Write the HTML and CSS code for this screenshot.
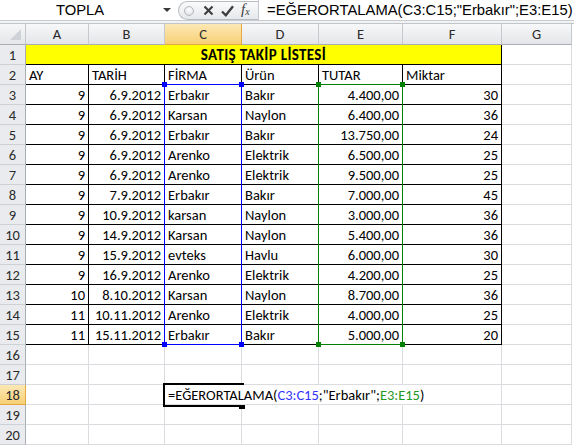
FILE: index.html
```html
<!DOCTYPE html>
<html lang="tr">
<head>
<meta charset="utf-8">
<title>SATIŞ TAKİP LİSTESİ</title>
<link rel="stylesheet" href="styles.css">
</head>
<body>
<div class="fbar">
  <div class="namebox"><span class="name">TOPLA</span><span class="dd"></span></div>
  <div class="capsule">
    <span class="bead"></span>
    <svg class="ico-x" width="11" height="11" viewBox="0 0 11 11"><path d="M1.5 1.5 L9.5 9.5 M9.5 1.5 L1.5 9.5" stroke="#3c3c3c" stroke-width="2.1" fill="none"/></svg>
    <svg class="ico-ok" width="13" height="12" viewBox="0 0 13 12"><path d="M1 6.5 L4.8 10.2 L12 1.2" stroke="#3c3c3c" stroke-width="2.3" fill="none"/></svg>
    <span class="fx"><i>f</i><sub>x</sub></span>
  </div>
  <div class="formula">=EĞERORTALAMA(C3:C15;"Erbakır";E3:E15)</div>
</div>
<div class="band"></div>
<div class="sheet">
  <div class="corner"><span class="tri"></span></div>
  <div class="ch">A</div><div class="ch">B</div><div class="ch hl">C</div><div class="ch">D</div><div class="ch">E</div><div class="ch">F</div><div class="ch">G</div>

  <div class="rh">1</div><div class="c title">SATIŞ TAKİP LİSTESİ</div><div class="c"></div>

  <div class="rh">2</div><div class="c t">AY</div><div class="c t">TARİH</div><div class="c t">FİRMA</div><div class="c t">Ürün</div><div class="c t">TUTAR</div><div class="c t">Miktar</div><div class="c"></div>

  <div class="rh">3</div><div class="c t r">9</div><div class="c t r">6.9.2012</div><div class="c t">Erbakır</div><div class="c t">Bakır</div><div class="c t r">4.400,00</div><div class="c t r">30</div><div class="c"></div>
  <div class="rh">4</div><div class="c t r">9</div><div class="c t r">6.9.2012</div><div class="c t">Karsan</div><div class="c t">Naylon</div><div class="c t r">6.400,00</div><div class="c t r">36</div><div class="c"></div>
  <div class="rh">5</div><div class="c t r">9</div><div class="c t r">6.9.2012</div><div class="c t">Erbakır</div><div class="c t">Bakır</div><div class="c t r">13.750,00</div><div class="c t r">24</div><div class="c"></div>
  <div class="rh">6</div><div class="c t r">9</div><div class="c t r">6.9.2012</div><div class="c t">Arenko</div><div class="c t">Elektrik</div><div class="c t r">6.500,00</div><div class="c t r">25</div><div class="c"></div>
  <div class="rh">7</div><div class="c t r">9</div><div class="c t r">6.9.2012</div><div class="c t">Arenko</div><div class="c t">Elektrik</div><div class="c t r">9.500,00</div><div class="c t r">25</div><div class="c"></div>
  <div class="rh">8</div><div class="c t r">9</div><div class="c t r">7.9.2012</div><div class="c t">Erbakır</div><div class="c t">Bakır</div><div class="c t r">7.000,00</div><div class="c t r">45</div><div class="c"></div>
  <div class="rh">9</div><div class="c t r">9</div><div class="c t r">10.9.2012</div><div class="c t">karsan</div><div class="c t">Naylon</div><div class="c t r">3.000,00</div><div class="c t r">36</div><div class="c"></div>
  <div class="rh">10</div><div class="c t r">9</div><div class="c t r">14.9.2012</div><div class="c t">Karsan</div><div class="c t">Naylon</div><div class="c t r">5.400,00</div><div class="c t r">36</div><div class="c"></div>
  <div class="rh">11</div><div class="c t r">9</div><div class="c t r">15.9.2012</div><div class="c t">evteks</div><div class="c t">Havlu</div><div class="c t r">6.000,00</div><div class="c t r">30</div><div class="c"></div>
  <div class="rh">12</div><div class="c t r">9</div><div class="c t r">16.9.2012</div><div class="c t">Arenko</div><div class="c t">Elektrik</div><div class="c t r">4.200,00</div><div class="c t r">25</div><div class="c"></div>
  <div class="rh">13</div><div class="c t r">10</div><div class="c t r">8.10.2012</div><div class="c t">Karsan</div><div class="c t">Naylon</div><div class="c t r">8.700,00</div><div class="c t r">36</div><div class="c"></div>
  <div class="rh">14</div><div class="c t r">11</div><div class="c t r">10.11.2012</div><div class="c t">Arenko</div><div class="c t">Elektrik</div><div class="c t r">4.000,00</div><div class="c t r">25</div><div class="c"></div>
  <div class="rh">15</div><div class="c t r">11</div><div class="c t r">15.11.2012</div><div class="c t">Erbakır</div><div class="c t">Bakır</div><div class="c t r">5.000,00</div><div class="c t r">20</div><div class="c"></div>

  <div class="rh">16</div><div class="c"></div><div class="c"></div><div class="c"></div><div class="c"></div><div class="c"></div><div class="c"></div><div class="c"></div>
  <div class="rh">17</div><div class="c"></div><div class="c"></div><div class="c"></div><div class="c"></div><div class="c"></div><div class="c"></div><div class="c"></div>
  <div class="rh hl">18</div><div class="c"></div><div class="c"></div><div class="c edit nr">=EĞERORTALAMA(<span class="rb">C3:C15</span>;"Erbakır";<span class="rg">E3:E15</span>)</div><div class="c nr"></div><div class="c nr"></div><div class="c"></div><div class="c"></div>
  <div class="rh">19</div><div class="c"></div><div class="c"></div><div class="c"></div><div class="c"></div><div class="c"></div><div class="c"></div><div class="c"></div>
  <div class="rh">20</div><div class="c"></div><div class="c"></div><div class="c"></div><div class="c"></div><div class="c"></div><div class="c"></div><div class="c"></div>

  <div class="sel sel-c"></div>
  <span class="hd hd-b h1"></span><span class="hd hd-b h2"></span><span class="hd hd-b h3"></span><span class="hd hd-b h4"></span>
  <div class="sel sel-e"></div>
  <span class="hd hd-g g1"></span><span class="hd hd-g g2"></span><span class="hd hd-g g3"></span><span class="hd hd-g g4"></span>
  <div class="active"></div>
  <span class="fill"></span>
</div>
</body>
</html>
```

FILE: styles.css
```css
* { box-sizing: border-box; margin: 0; padding: 0; }
html, body { background: #fff; }
body {
  width: 574px;
  height: 446px;
  overflow: hidden;
  font-family: "Carlito", "Calibri", "Lato", sans-serif;
  color: #000;
}

/* formula bar */
.fbar {
  display: flex;
  height: 21px;
  border-bottom: 1px solid #c8ccd1;
  font-family: "Liberation Sans", Arial, sans-serif;
  font-size: 14.8px;
}
.namebox {
  flex: none;
  width: 178px;
  display: flex;
  align-items: center;
}
.name {
  width: 160px;
  text-align: center;
  line-height: 20px;
}
.dd {
  width: 0;
  height: 0;
  margin-left: 3px;
  border-left: 4px solid transparent;
  border-right: 4px solid transparent;
  border-top: 4px solid #3a3a3a;
}
.capsule {
  flex: none;
  width: 80px;
  height: 19px;
  margin-top: 1px;
  display: flex;
  align-items: center;
  border: 1px solid #b7bcc2;
  border-right: none;
  border-radius: 10px 0 0 10px;
  background: linear-gradient(#fbfbfc, #e6e8eb);
  padding-left: 5px;
}
.bead {
  width: 10px;
  height: 10px;
  border-radius: 50%;
  border: 1px solid #b4b8bd;
  background: radial-gradient(circle at 50% 35%, #ffffff, #d6d9dd);
  margin-right: 9px;
}
.ico-x { margin-right: 7px; }
.ico-ok { margin-right: 7px; }
.fx {
  font-family: "Liberation Serif", serif;
  font-size: 15px;
  color: #3c3c3c;
  line-height: 15px;
}
.fx sub { font-size: 10px; font-style: italic; vertical-align: -1px; }
.formula {
  flex: 1;
  min-width: 0;
  overflow: hidden;
  border-left: 1px solid #c3c7cc;
  padding-left: 8px;
  line-height: 20px;
  white-space: nowrap;
}
.band {
  height: 3px;
  background: #f1f2f4;
  border-bottom: 1px solid #c1c5ca;
}

/* sheet grid */
.sheet {
  position: relative;
  display: grid;
  grid-template-columns: 26px 63px 76px 77px 77px 84px 99px 70px;
  grid-template-rows: 21px repeat(20, 20px);
  width: 572px;
  font-size: 14.5px;
}
.corner {
  position: relative;
  background: linear-gradient(#f6f7f8, #e4e6e9);
  border-right: 1px solid #c3c7cc;
  border-bottom: 1px solid #a9aeb5;
}
.tri {
  position: absolute;
  right: 4px;
  bottom: 4px;
  width: 0;
  height: 0;
  border-left: 11px solid transparent;
  border-bottom: 11px solid #cfd2d6;
}
.ch {
  background: linear-gradient(#f7f8f9, #e3e5e8);
  border-right: 1px solid #c6cacf;
  border-bottom: 1px solid #a9aeb5;
  text-align: center;
  line-height: 20px;
  color: #2b2b2b;
}
.rh {
  background: #e9ebee;
  border-right: 1px solid #a9aeb5;
  border-bottom: 1px solid #cdd1d6;
  text-align: center;
  line-height: 21px;
  color: #2b2b2b;
}
.ch.hl, .rh.hl {
  background: linear-gradient(#fce8b5, #f7d076);
  border-color: #e3a83f;
}
.c {
  border-right: 1px solid #dadcdf;
  border-bottom: 1px solid #dadcdf;
  padding: 0 3px;
  line-height: 21px;
  white-space: nowrap;
  overflow: hidden;
}
.c.t { border-color: #000; }
.c.r { text-align: right; }
.c.nr { border-right-color: transparent; }
.title {
  grid-column: 2 / span 6;
  background: #ffff00;
  border-right: 1px solid #000;
  border-bottom: 1px solid #000;
  font-weight: bold;
  text-align: center;
  font-size: 15px;
  letter-spacing: 0.35px;
}
.edit { overflow: visible; position: relative; z-index: 2; }
.rb { color: #3232ff; }
.rg { color: #1f9a1f; }

/* range highlights */
.sel {
  position: absolute;
  top: 60px;
  height: 261px;
  z-index: 3;
}
.sel-c { left: 164px; width: 78px; border: 1px solid #0000ff; }
.sel-e { left: 318px; width: 85px; border: 1px solid #008000; }
.hd {
  position: absolute;
  width: 5px;
  height: 5px;
  z-index: 4;
}
.hd-b { background: #0000ff; }
.hd-g { background: #008000; }
.h1 { left: 162px; top: 58px; }
.h2 { left: 239px; top: 58px; }
.h3 { left: 162px; top: 318px; }
.h4 { left: 239px; top: 318px; }
.g1 { left: 316px; top: 58px; }
.g2 { left: 400px; top: 58px; }
.g3 { left: 316px; top: 318px; }
.g4 { left: 400px; top: 318px; }

.active {
  position: absolute;
  left: 163px;
  top: 359px;
  width: 81px;
  height: 24px;
  border: 2px solid #000;
  border-right: none;
  z-index: 3;
}
.fill {
  position: absolute;
  left: 239px;
  top: 381px;
  width: 6px;
  height: 4px;
  background: #000;
  z-index: 4;
}
```
